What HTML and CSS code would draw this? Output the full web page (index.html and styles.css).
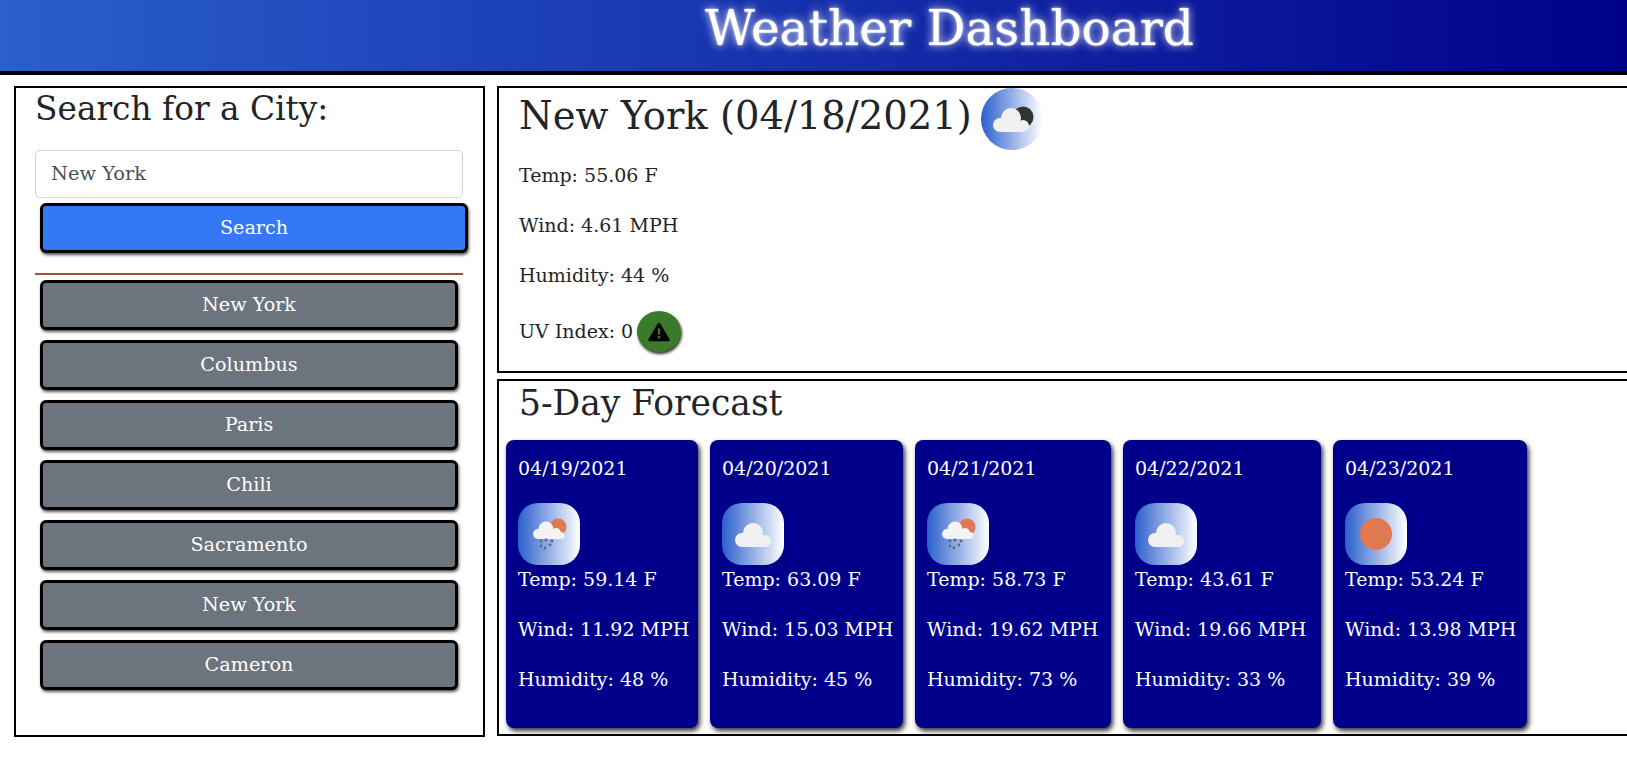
FILE: index.html
```html
<!DOCTYPE html>
<html lang="en">
<head>
<meta charset="utf-8">
<title>Weather Dashboard</title>
<link rel="stylesheet" href="styles.css">
</head>
<body>
<svg class="defs" width="0" height="0" aria-hidden="true">
  <defs>
    <g id="cloud-big"><circle cx="20" cy="37" r="7"/><circle cx="31" cy="30" r="10"/><circle cx="43" cy="38" r="6"/><rect x="20" y="36" width="23" height="8" rx="2"/></g>
    <g id="rain"><circle cx="23" cy="38" r="1.4"/><circle cx="28" cy="37" r="1.4"/><circle cx="34" cy="38" r="1.4"/><circle cx="23" cy="43" r="1.4"/><circle cx="27" cy="45" r="1.4"/><circle cx="32" cy="42" r="1.4"/></g>
    <g id="cloud-small"><circle cx="20" cy="31" r="5"/><circle cx="28" cy="26" r="7.5"/><circle cx="38" cy="30" r="5"/><circle cx="43" cy="32.5" r="3.5"/><rect x="20" y="29" width="23" height="7" rx="2"/></g>
  </defs>
</svg>
<header class="site-header"><h1>Weather Dashboard</h1></header>
<main class="layout">
  <aside class="sidebar">
    <h2 class="search-title">Search for a City:</h2>
    <input class="city-input" type="text" value="New York">
    <button class="btn btn-search">Search</button>
    <hr class="divider">
    <div class="history">
      <button class="btn btn-city">New York</button>
      <button class="btn btn-city">Columbus</button>
      <button class="btn btn-city">Paris</button>
      <button class="btn btn-city">Chili</button>
      <button class="btn btn-city">Sacramento</button>
      <button class="btn btn-city">New York</button>
      <button class="btn btn-city">Cameron</button>
    </div>
  </aside>
  <div class="content">
    <section class="panel current">
      <div class="current-head">
        <h2 class="city-title">New York (04/18/2021)</h2>
        <svg class="icon icon-round" viewBox="0 0 62 62"><circle cx="42" cy="29" r="10.5" fill="#333"/><use href="#cloud-big" fill="#f1f1f1" transform="translate(-1 0)"/></svg>
      </div>
      <p class="stat">Temp: 55.06 F</p>
      <p class="stat">Wind: 4.61 MPH</p>
      <p class="stat">Humidity: 44 %</p>
      <div class="uv">
        <span>UV Index: 0</span>
        <span class="uv-badge"><svg class="uv-icon" viewBox="0 0 22 20"><path d="M11 2 L20.5 18 H1.5 Z" fill="#000" stroke="#000" stroke-width="2.5" stroke-linejoin="round"/><rect x="9.8" y="6.5" width="2.4" height="6" fill="#3a7a28"/><rect x="9.8" y="14" width="2.4" height="2.4" fill="#3a7a28"/></svg></span>
      </div>
    </section>
    <section class="panel forecast">
      <h2 class="forecast-title">5-Day Forecast</h2>
      <div class="cards">
        <article class="card">
          <p class="date">04/19/2021</p>
          <svg class="icon" viewBox="0 0 62 62"><circle cx="40" cy="24" r="8.5" fill="#e07850"/><use href="#cloud-small" fill="#f4f4f4"/><use href="#rain" fill="#5a6a80"/></svg>
          <p class="stat">Temp: 59.14 F</p><p class="stat">Wind: 11.92 MPH</p><p class="stat">Humidity: 48 %</p>
        </article>
        <article class="card">
          <p class="date">04/20/2021</p>
          <svg class="icon" viewBox="0 0 62 62"><use href="#cloud-big" fill="#f1f1f1"/></svg>
          <p class="stat">Temp: 63.09 F</p><p class="stat">Wind: 15.03 MPH</p><p class="stat">Humidity: 45 %</p>
        </article>
        <article class="card">
          <p class="date">04/21/2021</p>
          <svg class="icon" viewBox="0 0 62 62"><circle cx="40" cy="24" r="8.5" fill="#e07850"/><use href="#cloud-small" fill="#f4f4f4"/><use href="#rain" fill="#5a6a80"/></svg>
          <p class="stat">Temp: 58.73 F</p><p class="stat">Wind: 19.62 MPH</p><p class="stat">Humidity: 73 %</p>
        </article>
        <article class="card">
          <p class="date">04/22/2021</p>
          <svg class="icon" viewBox="0 0 62 62"><use href="#cloud-big" fill="#f1f1f1"/></svg>
          <p class="stat">Temp: 43.61 F</p><p class="stat">Wind: 19.66 MPH</p><p class="stat">Humidity: 33 %</p>
        </article>
        <article class="card">
          <p class="date">04/23/2021</p>
          <svg class="icon" viewBox="0 0 62 62"><circle cx="31" cy="31" r="16" fill="#e07850"/></svg>
          <p class="stat">Temp: 53.24 F</p><p class="stat">Wind: 13.98 MPH</p><p class="stat">Humidity: 39 %</p>
        </article>
      </div>
    </section>
  </div>
</main>
</body>
</html>
```
FILE: styles.css
```css
* { box-sizing: border-box; }
html, body { overflow: hidden; }
body {
  margin: 0;
  height: 774px;
  background: #fff;
  color: #212529;
  font-family: "DejaVu Serif", "Liberation Serif", serif;
  font-size: 16px;
}
.defs { position: absolute; }
.site-header {
  height: 75px;
  border-bottom: 4px solid #000;
  background: linear-gradient(to right, #2a5fcc, #00008b);
  padding-left: 705px;
}
.site-header h1 {
  margin: 0;
  color: #fff;
  font-size: 48.5px;
  line-height: 56px;
  font-weight: 400;
  white-space: nowrap;
  text-shadow: 0 0 10px #fff, 0 0 2px #fff;
}
.layout {
  display: flex;
  gap: 12px;
  padding: 11px 0 0 14px;
  width: 1640px;
}
.sidebar {
  width: 471px;
  height: 651px;
  flex: none;
  border: 2px solid #000;
  padding: 0 19px;
}
.search-title {
  margin: 0 0 20px;
  font-size: 32.8px;
  line-height: 42px;
  font-weight: 400;
  white-space: nowrap;
}
.city-input {
  display: block;
  width: 428px;
  height: 48px;
  padding: 0 15px 2px;
  border: 1px solid #ced4da;
  border-radius: 5px;
  background: #fff;
  color: #495057;
  font: 19.4px/44px "DejaVu Serif", serif;
}
.btn {
  display: block;
  height: 50px;
  margin-left: 5px;
  padding: 0 0 2px;
  border: 3px solid #000;
  border-radius: 6px;
  color: #fff;
  font: 19.2px "DejaVu Serif", serif;
  box-shadow: 1px 2px 3px #555;
}
.btn-search { width: 428px; margin-top: 5px; background: #3478f6; }
.divider {
  margin: 20px 0 5px;
  width: 428px;
  height: 2px;
  border: 0;
  background: #a0522d;
  opacity: 1;
}
.history { display: flex; flex-direction: column; gap: 10px; }
.btn-city { width: 418px; background: #6c757d; }
.content { flex: 1; display: flex; flex-direction: column; gap: 6px; }
.panel { border: 2px solid #000; padding-left: 20px; }
.current { height: 287px; }
.forecast { height: 357px; padding-left: 7px; }
.current-head { display: flex; align-items: center; gap: 9px; height: 62px; }
.city-title { margin: -6px 0 0; font-size: 38.5px; line-height: 54px; font-weight: 400; white-space: nowrap; }
.icon { display: block; width: 62px; height: 62px; flex: none; border-radius: 20px; background: linear-gradient(to right, #2a5fcc, #fff); }
.icon-round { border-radius: 50%; }
.stat { margin: 0 0 24px; font-size: 19px; line-height: 26px; white-space: nowrap; }
.current-head + .stat { margin-top: 12px; }
.uv { display: flex; align-items: center; gap: 4px; font-size: 19px; line-height: 26px; margin-top: -3px; }
.uv-badge {
  display: flex;
  align-items: center;
  justify-content: center;
  width: 44px;
  height: 41px;
  margin-top: 2px;
  border-radius: 50%;
  background: #3a7a28;
  box-shadow: 1px 2px 3px #333;
}
.uv-icon { width: 22px; height: 20px; }
.forecast-title { margin: 0 0 15px 13px; font-size: 34.5px; line-height: 44px; font-weight: 400; white-space: nowrap; }
.cards {
  display: grid;
  grid-template-columns: 192px 193px 196px 198px 194px;
  gap: 12px;
  width: max-content;
}
.card {
  height: 288px;
  padding: 15px 0 0 12px;
  border-radius: 8px;
  background: #00008b;
  color: #fff;
  box-shadow: 2px 3px 5px #333;
}
.card .date { margin: 0 0 22px; font-size: 19px; line-height: 26px; }
.card .icon { margin-bottom: 1px; }
```
